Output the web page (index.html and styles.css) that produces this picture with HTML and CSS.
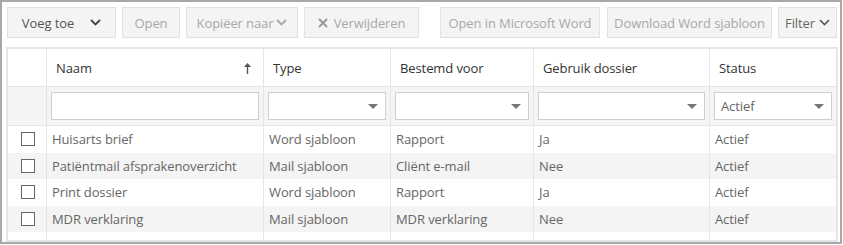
FILE: index.html
```html
<!DOCTYPE html>
<html lang="nl">
<head>
<meta charset="utf-8">
<title>Sjablonen</title>
<link rel="stylesheet" href="styles.css">
</head>
<body>
<div class="frame">
  <div class="toolbar">
    <button class="btn btn-add">Voeg toe <svg class="chev" width="11" height="7" viewBox="0 0 11 7"><path d="M1 1l4.5 4.5L10 1" fill="none" stroke="currentColor" stroke-width="1.8"/></svg></button>
    <button class="btn btn-open" disabled>Open</button>
    <button class="btn btn-copy" disabled>Kopiëer naar <svg class="chev" width="11" height="7" viewBox="0 0 11 7"><path d="M1 1l4.5 4.5L10 1" fill="none" stroke="currentColor" stroke-width="1.8"/></svg></button>
    <button class="btn btn-del" disabled><svg class="x" width="10" height="10" viewBox="0 0 10 10"><path d="M1 1l8 8M9 1l-8 8" stroke="currentColor" stroke-width="2"/></svg>Verwijderen</button>
    <button class="btn btn-word" disabled>Open in Microsoft Word</button>
    <button class="btn btn-dl" disabled>Download Word sjabloon</button>
    <button class="btn btn-filter">Filter <svg class="chev" width="11" height="7" viewBox="0 0 11 7"><path d="M1 1l4.5 4.5L10 1" fill="none" stroke="currentColor" stroke-width="1.6"/></svg></button>
  </div>

  <div class="grid">
    <div class="row head">
      <div class="cell"></div>
      <div class="cell th sorted">Naam <svg class="sort" width="7" height="11" viewBox="0 0 7 11"><path d="M3.5 0L7 4H0z" fill="currentColor"/><path d="M3.5 3V11" stroke="currentColor" stroke-width="1.4"/></svg></div>
      <div class="cell th">Type</div>
      <div class="cell th">Bestemd voor</div>
      <div class="cell th">Gebruik dossier</div>
      <div class="cell th">Status</div>
    </div>
    <div class="row filters">
      <div class="cell"></div>
      <div class="cell fc"><div class="input"></div></div>
      <div class="cell fc"><div class="input select"><span class="caret"></span></div></div>
      <div class="cell fc"><div class="input select"><span class="caret"></span></div></div>
      <div class="cell fc"><div class="input select"><span class="caret"></span></div></div>
      <div class="cell fc"><div class="input select"><span class="val">Actief</span><span class="caret"></span></div></div>
    </div>
    <div class="row data">
      <div class="cell cb"><span class="check"></span></div>
      <div class="cell td">Huisarts brief</div>
      <div class="cell td">Word sjabloon</div>
      <div class="cell td">Rapport</div>
      <div class="cell td">Ja</div>
      <div class="cell td">Actief</div>
    </div>
    <div class="row data alt">
      <div class="cell cb"><span class="check"></span></div>
      <div class="cell td">Patiëntmail afsprakenoverzicht</div>
      <div class="cell td">Mail sjabloon</div>
      <div class="cell td">Cliënt e-mail</div>
      <div class="cell td">Nee</div>
      <div class="cell td">Actief</div>
    </div>
    <div class="row data">
      <div class="cell cb"><span class="check"></span></div>
      <div class="cell td">Print dossier</div>
      <div class="cell td">Word sjabloon</div>
      <div class="cell td">Rapport</div>
      <div class="cell td">Ja</div>
      <div class="cell td">Actief</div>
    </div>
    <div class="row data alt">
      <div class="cell cb"><span class="check"></span></div>
      <div class="cell td">MDR verklaring</div>
      <div class="cell td">Mail sjabloon</div>
      <div class="cell td">MDR verklaring</div>
      <div class="cell td">Nee</div>
      <div class="cell td">Actief</div>
    </div>
    <div class="row filler">
      <div class="cell"></div><div class="cell"></div><div class="cell"></div><div class="cell"></div><div class="cell"></div><div class="cell"></div>
    </div>
  </div>
</div>
</body>
</html>
```

FILE: styles.css
```css
* { box-sizing: border-box; }
html, body { margin: 0; padding: 0; background: #fff; }
body {
  font-family: "Open Sans", "Noto Sans", sans-serif;
  font-size: 13px;
  letter-spacing: -0.1px;
  color: #333;
}
.frame {
  width: 842px;
  height: 244px;
  border: 2px solid #a8a8a8;
  overflow: hidden;
}
.toolbar {
  display: flex;
  align-items: center;
  padding: 5px 0 0 5px;
  height: 36px;
}
.btn {
  height: 31px;
  margin: 0 6px 0 0;
  padding: 0;
  border: 1px solid #e1e1e1;
  background: #f4f4f4;
  font-family: inherit;
  font-size: 13px;
  letter-spacing: -0.1px;
  color: #a8a8a8;
  display: flex;
  align-items: center;
  justify-content: center;
  gap: 6px;
}
.btn-add { width: 109px; color: #555; gap: 16px; }
.btn-add .chev { color: #444; }
.btn-open { width: 58px; }
.btn-copy { width: 112px; gap: 3px; }
.btn-del { width: 115px; margin-right: 21px; }
.btn-del .x { color: #999; }
.btn-word { width: 160px; margin-right: 7px; }
.btn-dl { width: 165px; }
.btn-filter { width: 59px; color: #666; gap: 4px; margin-right: 0; }
.btn-filter .chev { color: #555; }

.grid {
  margin: 9px 0 0 4px;
  width: 832px;
  height: 195px;
  border: 2px solid #e6e6e6;
  display: flex;
  flex-direction: column;
}
.row {
  display: grid;
  grid-template-columns: 38px 217px 127px 143px 176px 127px;
}
.cell + .cell { border-left: 1px solid #e6e6e6; }
.head { height: 38px; border-bottom: 1px solid #e6e6e6; }
.th {
  display: flex;
  align-items: center;
  padding-left: 9px;
  color: #333;
}
.sorted { justify-content: space-between; padding-right: 12px; }
.sort { color: #555; margin-top: 1px; }
.filters { height: 39px; background: #f4f4f4; border-bottom: 1px solid #e6e6e6; }
.fc { padding: 5px 4px 0 4px; }
.input {
  height: 28px;
  background: #fff;
  border: 1px solid #cfcfcf;
  position: relative;
  display: flex;
  align-items: center;
  padding-left: 6px;
  color: #666;
}
.caret {
  position: absolute;
  right: 7px;
  top: 11px;
  width: 0; height: 0;
  border-left: 5px solid transparent;
  border-right: 5px solid transparent;
  border-top: 5px solid #777;
}
.data { height: 26.5px; }
.alt { background: #f4f4f4; }
.td {
  display: flex;
  align-items: center;
  padding-left: 5px;
  color: #666;
  white-space: nowrap;
}
.cb { display: flex; align-items: center; padding-left: 13px; }
.check {
  width: 14px; height: 14px;
  border: 1px solid #666;
  background: #fff;
}
.filler { flex: 1; }
```
